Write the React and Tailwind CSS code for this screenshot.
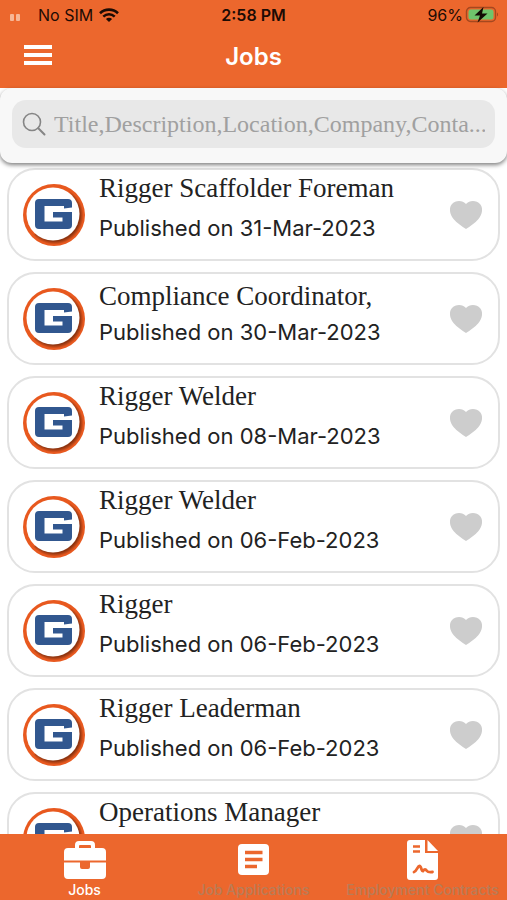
import React, { useState } from 'react';

const JOBS = [
  { id: 1, title: 'Rigger Scaffolder Foreman', published: '31-Mar-2023' },
  { id: 2, title: 'Compliance Coordinator,', published: '30-Mar-2023', tight: true },
  { id: 3, title: 'Rigger Welder', published: '08-Mar-2023' },
  { id: 4, title: 'Rigger Welder', published: '06-Feb-2023' },
  { id: 5, title: 'Rigger', published: '06-Feb-2023' },
  { id: 6, title: 'Rigger Leaderman', published: '06-Feb-2023' },
  { id: 7, title: 'Operations Manager', published: '06-Feb-2023' },
];

const WifiIcon = () => (
  <svg viewBox="0 0 20 14" className="w-5 h-[14px]" fill="none" stroke="#1c0b04" strokeWidth="2.6" aria-hidden="true">
    <path d="M1 5.2C6 .4 14 .4 19 5.2" />
    <path d="M4.3 8.6C7.6 5.5 12.4 5.5 15.7 8.6" />
    <path d="M10 14 6.9 10.9C8.6 9.3 11.4 9.3 13.1 10.9Z" fill="#1c0b04" stroke="none" />
  </svg>
);

const BatteryIcon = () => (
  <svg viewBox="0 0 34 18" className="w-[34px] h-[18px]" aria-hidden="true">
    <rect x="1.500" y="1.500" width="29" height="14" rx="4" fill="none" stroke="#a5481f" strokeWidth="1.4" />
    <rect x="3.500" y="3.500" width="25" height="10" rx="2.5" fill="#6fc46c" />
    <path d="M32 6.500v4c1.400-.5 1.400-3.500 0-4Z" fill="#a5481f" />
    <path d="M18.500 1 9.500 9.500H15l-2.500 7L22.500 7.500H17Z" fill="#120a04" />
  </svg>
);

const SearchIcon = () => (
  <svg viewBox="0 0 24 24" className="w-6 h-6 shrink-0" fill="none" stroke="#858585" strokeLinecap="round" aria-hidden="true">
    <circle cx="10" cy="10" r="8.500" strokeWidth="1.6" />
    <path d="m16.300 16.300 6.200 6.200" strokeWidth="2" />
  </svg>
);

const CompanyLogo = () => (
  <svg viewBox="0 0 64 64" className="w-16 h-16 shrink-0" role="img" aria-label="Company logo">
    <defs>
      <radialGradient id="logo-shade" cx="32.500" cy="32.500" r="29" gradientUnits="userSpaceOnUse">
        <stop offset=".88" stopColor="#8f3510" />
        <stop offset="1" stopColor="#e8591f" />
      </radialGradient>
    </defs>
    <circle cx="32" cy="32" r="31" fill="#e8591f" />
    <circle cx="32.500" cy="32.500" r="29" fill="url(#logo-shade)" />
    <path d="M3 38A29 29 0 0 1 46 7L50 12L12 52A28 28 0 0 1 3 38Z" fill="#e8591f" />
    <circle cx="31" cy="31" r="26.500" fill="#fff" />
    <path
      d="M17 16H46Q50 16 50 20V24.500L42 25.500V23H22.500V38.500H40.500V34.500H31V29H50V42Q50 46 46 46H17Q13 46 13 42V20Q13 16 17 16Z"
      fill="#31578f"
    />
  </svg>
);

const HeartIcon = () => (
  <svg viewBox="0 0 32 28" className="w-8 h-7" fill="currentColor" aria-hidden="true">
    <path d="M16 28C12 25.500 7 22 3.500 18C-.8 13-1 6.500 1.800 3.200C5.500-1 12.500-1 16 3C19.500-1 26.500-1 30.200 3.200C33 6.500 32.800 13 28.500 18C25 22 20 25.500 16 28Z" />
  </svg>
);

const BriefcaseIcon = () => (
  <svg viewBox="0 0 42 40" className="w-[42px] h-10" fill="#fff" aria-hidden="true">
    <path d="M11 8V5Q11 1 15 1H27Q31 1 31 5V8H38Q42 8 42 12V20.500H0V12Q0 8 4 8ZM15 8H27V6Q27 5 26 5H16Q15 5 15 6Z" />
    <path d="M0 22.500H16V27Q16 29 18 29H24Q26 29 26 27V22.500H42V35Q42 39 38 39H4Q0 39 0 35Z" />
  </svg>
);

const ApplicationsIcon = () => (
  <svg viewBox="0 0 32 40" className="w-8 h-10" aria-hidden="true">
    <rect x="0" y="4" width="31" height="31" rx="4" fill="#fff" />
    <path d="M7 12.500H24.500M7 19.500H24.500M7 26.500H19" stroke="#ec672d" strokeWidth="3.400" />
  </svg>
);

const ContractIcon = () => (
  <svg viewBox="0 0 32 40" className="w-8 h-10" aria-hidden="true">
    <path d="M3 0H18V13H31V37Q31 40 28 40H3Q0 40 0 37V3Q0 0 3 0Z" fill="#fff" />
    <path d="M20.500 0 31 11H20.500Z" fill="#fff" />
    <path d="M6 6.500H13M6 11.500H13" stroke="#ec672d" strokeWidth="2.500" />
    <path d="M7 32C10 31 10.500 26 12.500 26S14 31 16 31C17.500 29 18.500 29 20 31Q21 32.500 25.500 32" fill="none" stroke="#ec672d" strokeWidth="2.800" strokeLinecap="round" />
  </svg>
);

const TABS = [
  { id: 'jobs', label: 'Jobs', Icon: BriefcaseIcon },
  { id: 'applications', label: 'Job Applications', Icon: ApplicationsIcon },
  { id: 'contracts', label: 'Employment Contracts', Icon: ContractIcon },
];

const JobCard = ({ job, liked, onToggle }) => (
  <li className="h-[93px] shrink-0 flex items-center pl-[13px] pr-4 rounded-[28px] border-2 border-[#e2e2e2] bg-white">
    <CompanyLogo />
    <div className="flex-1 min-w-0 h-full ml-[13px] text-[#222]">
      <div className="h-9 flex flex-col justify-end">
        <h2 className={`font-['Liberation_Serif',serif] text-[27px] whitespace-nowrap ${job.tight ? 'leading-[28px]' : 'leading-9'}`}>
          {job.title}
        </h2>
      </div>
      <p className="mt-1 text-[22px] leading-9 truncate">Published on {job.published}</p>
    </div>
    <button
      type="button"
      aria-label={`Save ${job.title}`}
      aria-pressed={liked}
      onClick={() => onToggle(job.id)}
      className={liked ? 'text-[#ec672d]' : 'text-[#cdcdcd]'}
    >
      <HeartIcon />
    </button>
  </li>
);

const App = () => {
  const [query, setQuery] = useState('');
  const [activeTab, setActiveTab] = useState('jobs');
  const [likedIds, setLikedIds] = useState([]);

  const toggleLike = (id) => {
    setLikedIds((ids) => (ids.includes(id) ? ids.filter((i) => i !== id) : [...ids, id]));
  };

  const visibleJobs = JOBS.filter((job) => job.title.toLowerCase().includes(query.toLowerCase()));

  return (
    <div className="h-screen flex flex-col overflow-hidden bg-white font-['Inter',sans-serif]">
      <header className="shrink-0 bg-[#ec672d]">
        {/* Status bar */}
        <div className="h-[30px] px-2 grid grid-cols-3 items-center text-base text-[#1c0b04]">
          <div className="flex items-center">
            <span className="flex gap-[2px] mt-1 ml-[2px] mr-[18px]" aria-hidden="true">
              <span className="w-1 h-[7px] rounded-[1px] bg-[#f7b696]"></span>
              <span className="w-1 h-[7px] rounded-[1px] bg-[#f7b696]"></span>
            </span>
            <span className="mr-[6px]">No SIM</span>
            <WifiIcon />
          </div>
          <span className="text-center font-semibold">2:58 PM</span>
          <div className="flex items-center justify-end gap-[2px]">
            <span>96%</span>
            <BatteryIcon />
          </div>
        </div>

        <div className="h-[58px] px-6 grid grid-cols-3 items-center">
          <button type="button" aria-label="Open menu" className="w-7 flex flex-col gap-1 mb-2">
            <span className="h-1 bg-white"></span>
            <span className="h-1 bg-white"></span>
            <span className="h-1 bg-white"></span>
          </button>
          <h1 className="text-center text-[24px] leading-8 mb-1 font-semibold text-white">Jobs</h1>
        </div>
      </header>

      <div className="relative z-10 shrink-0 h-[75px] px-3 pt-3 rounded-xl bg-[#f8f8f8] shadow-[0_2px_4px_rgba(0,0,0,0.5)]">
        <label className="h-12 flex items-center gap-2 px-[10px] rounded-[14px] bg-[#e8e8e8]">
          <SearchIcon />
          <input
            type="text"
            aria-label="Search jobs"
            value={query}
            onChange={(e) => setQuery(e.target.value)}
            placeholder="Title,Description,Location,Company,Conta..."
            className="flex-1 min-w-0 bg-transparent outline-none font-['Liberation_Serif',serif] text-[24px] text-[#222] placeholder:text-[#a0a0a0]"
          />
        </label>
      </div>

      <main className="flex-1 min-h-0 overflow-y-auto [scrollbar-width:none] px-[7px] pt-[5px]">
        <ul className="flex flex-col gap-[11px] pb-[11px]">
          {visibleJobs.map((job) => (
            <JobCard key={job.id} job={job} liked={likedIds.includes(job.id)} onToggle={toggleLike} />
          ))}
        </ul>
      </main>

      <nav className="relative z-10 shrink-0 h-[66px] grid grid-cols-3 bg-[#ec672d]">
        {TABS.map(({ id, label, Icon }) => (
          <button
            key={id}
            type="button"
            onClick={() => setActiveTab(id)}
            className={`flex flex-col items-center pt-[6px] text-[14px] leading-5 whitespace-nowrap font-medium ${activeTab === id ? 'text-white' : 'text-[#b97c57]'}`}
          >
            <Icon />
            {label}
          </button>
        ))}
      </nav>
    </div>
  );
};

export default App;
